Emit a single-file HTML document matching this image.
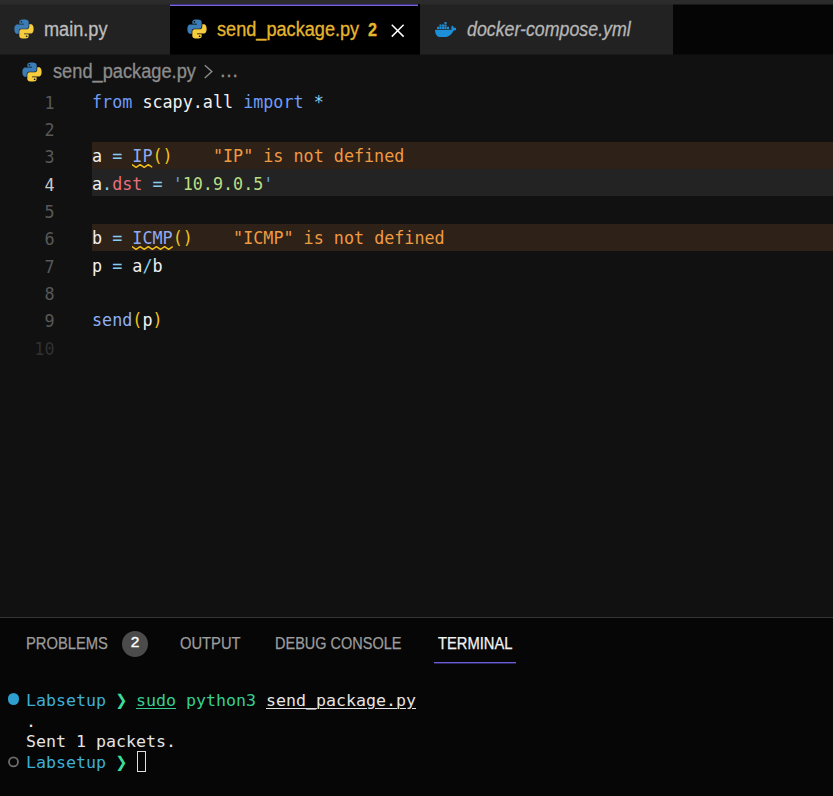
<!DOCTYPE html>
<html lang="en">
<head>
<meta charset="utf-8">
<title>send_package.py</title>
<style>
html,body{margin:0;padding:0;}
body{width:833px;height:796px;overflow:hidden;background:#111111;position:relative;
  font-family:"Liberation Sans","DejaVu Sans",sans-serif;color:#ccc;}
.abs{position:absolute;}
#topstrip{left:0;top:0;width:833px;height:4px;background:#2b2b2b;}
#tabbar{left:0;top:4px;width:833px;height:51px;background:linear-gradient(#181818 0,#181818 1px,#050505 1px,#050505 50px,#0b0b0b 50px,#0b0b0b 51px);}
.tab{position:absolute;top:0;height:51px;background:linear-gradient(#262626 0,#262626 1px,#222222 1px,#222222 50px,#1a1a1a 50px,#1a1a1a 51px);box-sizing:border-box;}
.lbl{position:absolute;white-space:nowrap;transform-origin:0 50%;-webkit-text-stroke:0.3px currentColor;}
.tab .lbl{top:0;line-height:51px;font-size:19.5px;}
#tab1{left:0;width:170px;}
#tab2{left:170px;width:250px;background:linear-gradient(#000 0,#000 50px,#080808 50px,#080808 51px);}
#tab2:before{content:"";position:absolute;left:0;top:0;width:248px;height:2px;background:linear-gradient(#3f3288 0,#3f3288 50%,#7a68d6 50%,#7a68d6 100%);}
#tab3{left:420px;width:253px;}
.pyico{position:absolute;}
#crumbs{left:0;top:54px;width:833px;height:33px;}
#crumbs .lbl{top:0;line-height:34px;font-size:19.5px;color:#8c8c8c;}
#editor{left:0;top:87.4px;width:833px;height:530px;}
.line{position:absolute;left:0;width:833px;height:27.33px;line-height:27.33px;
  font-family:"DejaVu Sans Mono","Liberation Mono",monospace;font-size:16.74px;white-space:pre;}
.ln{position:absolute;left:0;top:2.300px;width:54.5px;text-align:right;color:#585858;}
.code{position:absolute;left:92px;top:1.200px;}
.hl{position:absolute;left:92px;right:0;}
.warnbg{background:#2d2118;}
.curbg{background:#232323;}
.kw{color:#6f9bf5;}
.w{color:#f0f0f0;}
.op{color:#86cdf0;}
.cls{color:#8fabf2;}
.br{color:#f2c31c;}
.prop{color:#ea6f7c;}
.q{color:#5f9fe0;}
.str{color:#b9de82;}
.fn{color:#8fb0f5;}
.msg{color:#f09a42;}
#panel{left:0;top:617px;width:833px;height:179px;background:#060606;border-top:1px solid #333;box-sizing:border-box;}
.ptab{position:absolute;font-size:16.2px;color:#9d9d9d;white-space:nowrap;line-height:20px;transform-origin:0 50%;-webkit-text-stroke:0.25px currentColor;}
.tline{position:absolute;left:26px;font-family:"DejaVu Sans Mono","Liberation Mono",monospace;font-size:16.61px;white-space:pre;line-height:21px;color:#e4e4e4;}
.cy{color:#3eaed6;}
.gr{color:#3ddc9c;}
.gr2{color:#36cf8f;}
.ch{display:inline-block;transform:translate(0.3px,-0.3px) scale(1.18,1.25);font-weight:bold;}
.ul{text-decoration:underline;text-decoration-thickness:1.3px;text-underline-offset:1.8px;}
</style>
</head>
<body>
<div id="topstrip" class="abs"></div>
<div id="tabbar" class="abs">
  <div id="tab1" class="tab">
    <svg class="pyico" style="left:12.6px;top:14.3px" width="22" height="22" viewBox="0 0 32 32"><path fill="#3b7db6" d="M15.885,2.100c-7.100,0-6.651,3.070-6.651,3.070V8.360h6.752v1H6.545S2,8.800,2,16.005s4.013,6.912,4.013,6.912H8.330V19.556s-.130-4.013,3.900-4.013h6.762s3.772.060,3.772-3.652V5.800s.572-3.712-6.842-3.712ZM12.153,4.237a1.214,1.214,0,1,1-1.183,1.244v-.020a1.214,1.214,0,0,1,1.214-1.214Z"/><path fill="#f5cd3e" d="M16.085,29.910c7.100,0,6.651-3.080,6.651-3.080V23.650H15.985v-1h9.470S30,23.158,30,15.995s-4.013-6.912-4.013-6.912H23.640V12.400s.130,4.013-3.900,4.013H12.975S9.200,16.356,9.200,20.068V26.200s-.572,3.712,6.842,3.712ZM19.817,27.763A1.214,1.214,0,1,1,21,26.519v.030a1.214,1.214,0,0,1-1.214,1.214Z"/></svg>
    <span class="lbl" id="l1" style="left:44px;color:#bcbcbc;transform:scaleX(0.93)">main.py</span>
  </div>
  <div id="tab2" class="tab">
    <svg class="pyico" style="left:15.5px;top:14.3px" width="22" height="22" viewBox="0 0 32 32"><path fill="#3b7db6" d="M15.885,2.100c-7.100,0-6.651,3.070-6.651,3.070V8.360h6.752v1H6.545S2,8.800,2,16.005s4.013,6.912,4.013,6.912H8.330V19.556s-.130-4.013,3.900-4.013h6.762s3.772.060,3.772-3.652V5.800s.572-3.712-6.842-3.712ZM12.153,4.237a1.214,1.214,0,1,1-1.183,1.244v-.020a1.214,1.214,0,0,1,1.214-1.214Z"/><path fill="#f5cd3e" d="M16.085,29.910c7.100,0,6.651-3.080,6.651-3.080V23.650H15.985v-1h9.470S30,23.158,30,15.995s-4.013-6.912-4.013-6.912H23.640V12.400s.130,4.013-3.900,4.013H12.975S9.200,16.356,9.200,20.068V26.200s-.572,3.712,6.842,3.712ZM19.817,27.763A1.214,1.214,0,1,1,21,26.519v.030a1.214,1.214,0,0,1-1.214,1.214Z"/></svg>
    <span class="lbl" id="l2" style="left:46.5px;color:#e6b52e;transform:scaleX(0.93)">send_package.py</span>
    <span class="lbl" id="l3" style="left:197.5px;margin-top:1px;color:#e6b52e;font-weight:bold;font-size:18px;transform:scaleX(0.9)">2</span>
    <svg class="abs" style="left:221.4px;top:20.2px" width="13.400" height="13.400" viewBox="0 0 14 14"><path d="M0.8 0.8 L13.2 13.2 M13.2 0.8 L0.8 13.2" stroke="#ffffff" stroke-width="1.5" fill="none"/></svg>
  </div>
  <div id="tab3" class="tab">
    <svg class="abs" style="left:14.5px;top:17.5px" width="21.6" height="15.6" viewBox="0 0 24 17.300"><path fill="#1d8fd8" d="M23.600 6.900c-.5-.4-1.700-.500-2.600-.300-.1-.9-.6-1.700-1.500-2.400l-.5-.3-.3.500c-.4.600-.6 1.500-.600 2.300.1.500.2 1 .6 1.500-.4.200-1.200.5-2.200.500H.200c-.3 1.800.1 8.600 8 8.600 5.800 0 10.200-2.700 12.200-7.600.8 0 2.500 0 3.400-1.700l.2-.4-.4-.700zM2.300 5.400h2.300v2.300H2.300zM5 5.400h2.300v2.300H5zM7.800 5.400h2.300v2.300H7.800zM10.500 5.400h2.300v2.300h-2.300zM13.300 5.400h2.300v2.300h-2.300zM5 2.700h2.300V5H5zM7.800 2.700h2.300V5H7.800zM10.500 2.700h2.300V5h-2.300zM10.500 0h2.300v2.300h-2.300z"/></svg>
    <span class="lbl" id="l4" style="left:46.500px;color:#b6b6b6;font-style:italic;transform:scaleX(0.912)">docker-compose.yml</span>
  </div>
</div>

<div id="crumbs" class="abs">
  <svg class="pyico" style="left:20.6px;top:6.6px" width="22" height="22" viewBox="0 0 32 32"><path fill="#3b7db6" d="M15.885,2.100c-7.100,0-6.651,3.070-6.651,3.070V8.360h6.752v1H6.545S2,8.800,2,16.005s4.013,6.912,4.013,6.912H8.330V19.556s-.130-4.013,3.900-4.013h6.762s3.772.060,3.772-3.652V5.800s.572-3.712-6.842-3.712ZM12.153,4.237a1.214,1.214,0,1,1-1.183,1.244v-.020a1.214,1.214,0,0,1,1.214-1.214Z"/><path fill="#f5cd3e" d="M16.085,29.910c7.100,0,6.651-3.080,6.651-3.080V23.650H15.985v-1h9.470S30,23.158,30,15.995s-4.013-6.912-4.013-6.912H23.640V12.400s.130,4.013-3.900,4.013H12.975S9.200,16.356,9.200,20.068V26.200s-.572,3.712,6.842,3.712ZM19.817,27.763A1.214,1.214,0,1,1,21,26.519v.030a1.214,1.214,0,0,1-1.214,1.214Z"/></svg>
  <span class="lbl" id="l5" style="left:52.5px;transform:scaleX(0.935)">send_package.py</span>
  <svg class="abs" style="left:203px;top:10px" width="11" height="15" viewBox="0 0 11 15"><path d="M1.800 1.200 L8.800 7.600 L1.800 14" stroke="#8c8c8c" stroke-width="1.400" fill="none"/></svg>
  <span class="lbl" id="l6" style="left:219.300px;margin-top:-1px;letter-spacing:0.500px">…</span>
</div>

<div id="editor" class="abs">
  <div class="hl warnbg" style="top:54.600px;height:27px"></div>
  <div class="hl curbg" style="top:81.600px;height:27px"></div>
  <div class="hl warnbg" style="top:136.600px;height:27px"></div>
  <div class="line" style="top:0px"><span class="ln">1</span><span class="code"><span class="kw">from</span><span class="w"> scapy.all </span><span class="kw">import</span><span class="w"> </span><span class="op">*</span></span></div>
  <div class="line" style="top:27.330px"><span class="ln">2</span></div>
  <div class="line" style="top:54.670px"><span class="ln">3</span><span class="code"><span class="w">a </span><span class="op">=</span><span class="w"> </span><span class="cls">IP</span><span class="br">()</span><span class="msg">    "IP" is not defined</span></span></div>
  <div class="line" style="top:82px"><span class="ln" style="color:#c8c8c8">4</span><span class="code"><span class="w">a</span><span class="op">.</span><span class="prop">dst</span><span class="w"> </span><span class="op">=</span><span class="w"> </span><span class="q">'</span><span class="str">10.9.0.5</span><span class="q">'</span></span></div>
  <div class="line" style="top:109.330px"><span class="ln">5</span></div>
  <div class="line" style="top:136.670px"><span class="ln">6</span><span class="code"><span class="w">b </span><span class="op">=</span><span class="w"> </span><span class="cls">ICMP</span><span class="br">()</span><span class="msg">    "ICMP" is not defined</span></span></div>
  <div class="line" style="top:164px"><span class="ln">7</span><span class="code"><span class="w">p </span><span class="op">=</span><span class="w"> a</span><span class="op">/</span><span class="w">b</span></span></div>
  <div class="line" style="top:191.330px"><span class="ln">8</span></div>
  <div class="line" style="top:218.670px"><span class="ln">9</span><span class="code"><span class="fn">send</span><span class="br">(</span><span class="w">p</span><span class="br">)</span></span></div>
  <div class="line" style="top:246px"><span class="ln" style="color:#303030">10</span></div>
  <svg class="abs" style="left:132.3px;top:75.65px" width="20.7" height="6" viewBox="0 0 20.7 6"><path d="M0.00 1.65 L4.08 4.35 L8.15 1.65 L12.23 4.35 L16.30 1.65 L19.70 3.90" fill="none" stroke="#f0c01c" stroke-width="1.5" stroke-linejoin="round" stroke-linecap="round"/></svg>
  <svg class="abs" style="left:132.3px;top:157.65px" width="41.3" height="6" viewBox="0 0 41.3 6"><path d="M0.00 1.65 L4.08 4.35 L8.15 1.65 L12.23 4.35 L16.30 1.65 L20.38 4.35 L24.45 1.65 L28.53 4.35 L32.60 1.65 L36.68 4.35 L40.30 1.95" fill="none" stroke="#f0c01c" stroke-width="1.5" stroke-linejoin="round" stroke-linecap="round"/></svg>
</div>

<div id="panel" class="abs">
  <span class="ptab" id="p1" style="left:25.700px;top:14.800px;transform:scaleX(0.91)">PROBLEMS</span>
  <span class="abs" style="left:122px;top:13px;width:26px;height:26px;border-radius:13px;background:#4b4b4b;color:#ffffff;font-size:15.500px;-webkit-text-stroke:0.4px #fff;line-height:22px;text-align:center">2</span>
  <span class="ptab" id="p2" style="left:179.500px;top:14.800px;transform:scaleX(0.91)">OUTPUT</span>
  <span class="ptab" id="p3" style="left:275px;top:14.800px;transform:scaleX(0.895)">DEBUG CONSOLE</span>
  <span class="ptab" id="p4" style="left:437.500px;top:14.800px;color:#f4f4f4;transform:scaleX(0.91)">TERMINAL</span>
  <div class="abs" style="left:434px;top:44px;width:82px;height:2px;background:linear-gradient(#6c5dd2 0,#6c5dd2 1px,#2c2660 1px,#2c2660 2px)"></div>

  <div class="abs" style="left:7.900px;top:75.200px;width:11.400px;height:11.400px;border-radius:50%;background:#2f9fd0"></div>
  <div class="tline" style="top:71.800px"><span class="cy">Labsetup</span> <span class="gr ch">❯</span> <span class="gr2 ul">sudo</span> <span class="gr2">python3</span> <span class="ul">send_package.py</span></div>
  <div class="tline" style="top:92.600px">.</div>
  <div class="tline" style="top:113.400px">Sent 1 packets.</div>
  <svg class="abs" style="left:7px;top:137px" width="13" height="13" viewBox="0 0 13 13"><circle cx="6.500" cy="6.900" r="4.500" fill="none" stroke="#6c6c6c" stroke-width="1.800"/></svg>
  <div class="tline" style="top:134.300px"><span class="cy">Labsetup</span> <span class="gr ch">❯</span> </div>
  <div class="abs" style="left:136.500px;top:133.300px;width:7.500px;height:18.800px;border:1px solid #e0e0e0"></div>
</div>
</body>
</html>
